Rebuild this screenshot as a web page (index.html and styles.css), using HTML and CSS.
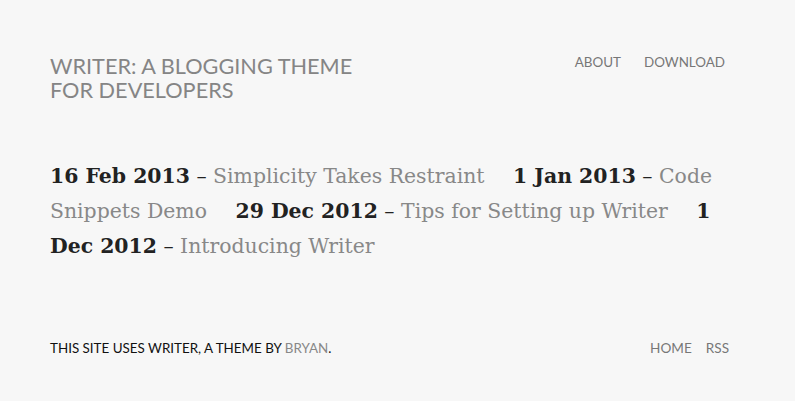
FILE: index.html
```html
<!DOCTYPE html>
<html>
<head>
<meta charset="utf-8">
<link rel="stylesheet" href="styles.css">
</head>
<body>
<div class="wrap">
  <header class="site-header">
    <h1 class="site-title"><a href="#">Writer: A Blogging Theme<br>for Developers</a></h1>
    <nav class="site-nav">
      <a href="#">About</a>
      <a href="#">Download</a>
    </nav>
  </header>
  <main class="posts">
    <ul class="post-list">
      <li><span class="date">16 Feb 2013</span> – <a href="#">Simplicity Takes Restraint</a></li>
      <li><span class="date">1 Jan 2013</span> – <a href="#">Code Snippets Demo</a></li>
      <li><span class="date">29 Dec 2012</span> – <a href="#">Tips for Setting up Writer</a></li>
      <li><span class="date">1 Dec 2012</span> – <a href="#">Introducing Writer</a></li>
    </ul>
  </main>
  <footer class="site-footer">
    <p class="credit">This site uses Writer, a theme by <a href="#">Bryan</a>.</p>
    <nav class="footer-nav">
      <a href="#">Home</a>
      <a href="#">RSS</a>
    </nav>
  </footer>
</div>
</body>
</html>
```
FILE: styles.css
```css
html, body {
  margin: 0;
  padding: 0;
  background: #f7f7f7;
}
.wrap {
  width: 680px;
  padding: 0 65px 0 50px;
}
a {
  text-decoration: none;
  color: #888;
}
.site-header {
  display: flex;
  justify-content: space-between;
  align-items: flex-start;
  padding-top: 54px;
  font-family: Lato, "Liberation Sans", sans-serif;
}
.site-title {
  margin: 0;
  font-size: 21.7px;
  line-height: 24px;
  font-weight: 400;
  text-transform: uppercase;
}
.site-title a { color: #858585; }
.site-nav {
  display: flex;
  gap: 23px;
  padding-top: 0;
  margin-right: 5px;
  font-size: 13.4px;
  line-height: 16px;
  text-transform: uppercase;
}
.site-nav a { color: #777; }
.posts {
  padding-top: 57px;
}
.post-list {
  list-style: none;
  margin: 0;
  padding: 0;
  font-family: "DejaVu Serif", serif;
  font-size: 20.4px;
  line-height: 35px;
  color: #222;
}
.post-list li {
  display: inline;
  margin-right: 22px;
}
.date { font-weight: 700; }
.post-list a { color: #888; }
.site-footer {
  display: flex;
  justify-content: space-between;
  align-items: center;
  padding-top: 76px;
  font-family: Lato, "Liberation Sans", sans-serif;
  font-size: 13.4px;
  line-height: 16px;
  text-transform: uppercase;
}
.credit { margin: 0; color: #111; }
.footer-nav {
  display: flex;
  gap: 14px;
  font-size: 13.6px;
  margin-right: 1px;
}
.footer-nav a { color: #777; }
```
